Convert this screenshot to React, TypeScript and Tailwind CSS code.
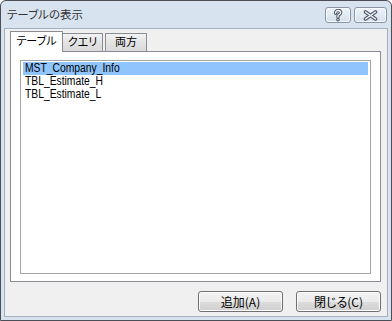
import React from "react";

const jp = {
  fontFamily: "'Noto Sans CJK JP', 'Noto Sans', sans-serif",
  fontFeatureSettings: "'palt'",
} as React.CSSProperties;

function HelpIcon() {
  return (
    <svg width="12" height="13" viewBox="0 0 12 13">
      <path
        d="M3.5 4.2 C3.5 2.4 4.6 1.5 6 1.5 C7.5 1.5 8.6 2.4 8.6 3.8 C8.6 5.2 7.2 5.6 6.3 6.3 C6 6.6 6 7.2 6 8"
        fill="none"
        stroke="#4f5966"
        strokeWidth="3.4"
        strokeLinecap="round"
      />
      <circle cx="6" cy="10.8" r="1.8" fill="#4f5966" />
      <path
        d="M3.5 4.2 C3.5 2.4 4.6 1.5 6 1.5 C7.5 1.5 8.6 2.4 8.6 3.8 C8.6 5.2 7.2 5.6 6.3 6.3 C6 6.6 6 7.2 6 8"
        fill="none"
        stroke="#f4f6f9"
        strokeWidth="1.3"
        strokeLinecap="round"
      />
      <circle cx="6" cy="10.8" r="0.7" fill="#f4f6f9" />
    </svg>
  );
}

function CloseIcon() {
  return (
    <svg width="15" height="11" viewBox="0 0 15 11">
      <path d="M2.5 2 L12.5 9 M2.5 9 L12.5 2" stroke="#4f5966" strokeWidth="3.6" strokeLinecap="round" />
      <path d="M2.5 2 L12.5 9 M2.5 9 L12.5 2" stroke="#f4f6f9" strokeWidth="1.5" strokeLinecap="round" />
    </svg>
  );
}

function CaptionButton({ children, w }: { children: React.ReactNode; w: string }) {
  return (
    <div
      className={`${w} h-[16px] rounded-[3px] border border-[#8995a4] bg-[linear-gradient(#eef3f9,#d6e0ec)] shadow-[inset_0_0_0_1px_#f7f9fc] flex items-center justify-center`}
    >
      {children}
    </div>
  );
}

function Button({ label }: { label: string }) {
  return (
    <div
      className="w-[85px] h-[21px] rounded-[3px] border border-[#707070] bg-[linear-gradient(#f2f2f2_0%,#ebebeb_50%,#dddddd_50%,#cfcfcf_100%)] shadow-[inset_0_0_0_1px_#fbfbfb] flex items-center justify-center text-[12px] leading-none text-black"
      style={jp}
    >
      {label}
    </div>
  );
}

export default function App() {
  const items = ["MST_Company_Info", "TBL_Estimate_H", "TBL_Estimate_L"];
  return (
    <div className="w-[392px] h-[321px] bg-white overflow-hidden">
      <div className="w-[392px] h-[321px] flex flex-col rounded-t-[6px] border border-[#4b4f55] bg-[#d8e3f0]">
        <div className="h-[27px] flex items-center justify-between pl-[6px] pr-[4px]">
          <span className="text-[11.5px] leading-none text-[#333] mt-[1px]" style={jp}>
            テーブルの表示
          </span>
          <div className="flex items-center gap-[3px] mt-[1px]">
            <CaptionButton w="w-[26px]">
              <HelpIcon />
            </CaptionButton>
            <CaptionButton w="w-[33px]">
              <CloseIcon />
            </CaptionButton>
          </div>
        </div>
        <div className="flex-1 mx-[3px] mb-[3px] border border-[#a4b0bf] bg-[#f0f0f0] flex flex-col pl-[5px] pr-[6px] pt-[2px]">
          <div className="flex items-end h-[21px] -mb-px relative z-10">
            <div
              className="w-[53px] h-[21px] bg-white border border-[#898c95] border-b-0 flex justify-center pt-[3px] text-[11px] leading-none text-black"
              style={jp}
            >
              テーブル
            </div>
            <div
              className="w-[40px] h-[18px] mb-px bg-[linear-gradient(#f3f3f3,#e3e3e3_50%,#d9d9d9)] border border-[#898c95] border-b-0 border-l-0 flex justify-center pt-[2px] text-[11px] leading-none text-black"
              style={jp}
            >
              クエリ
            </div>
            <div
              className="w-[42px] h-[18px] mb-px ml-[2px] bg-[linear-gradient(#f3f3f3,#e3e3e3_50%,#d9d9d9)] border border-[#898c95] border-b-0 flex justify-center pt-[2px] text-[11px] leading-none text-black"
              style={jp}
            >
              両方
            </div>
          </div>
          <div className="h-[231px] bg-white border border-[#898c95] pl-[9px] pt-[8px]">
            <div className="w-[351px] h-[214px] border border-[#a5a5a5] bg-white px-[2px] pt-[1px]">
              {items.map((t, i) => (
                <div
                  key={t}
                  className={`h-[13px] pl-[2px] text-[12px] leading-[13px] text-black whitespace-nowrap ${
                    i === 0 ? "bg-[#8fc5fc]" : ""
                  }`}
                  style={{ fontFamily: "'Liberation Sans', Arial, sans-serif" }}
                >
                  <span className="inline-block origin-left scale-x-[0.86]">{t}</span>
                </div>
              ))}
            </div>
          </div>
          <div className="flex justify-end gap-[13px] mt-[9px]">
            <Button label="追加(A)" />
            <Button label="閉じる(C)" />
          </div>
        </div>
      </div>
    </div>
  );
}
